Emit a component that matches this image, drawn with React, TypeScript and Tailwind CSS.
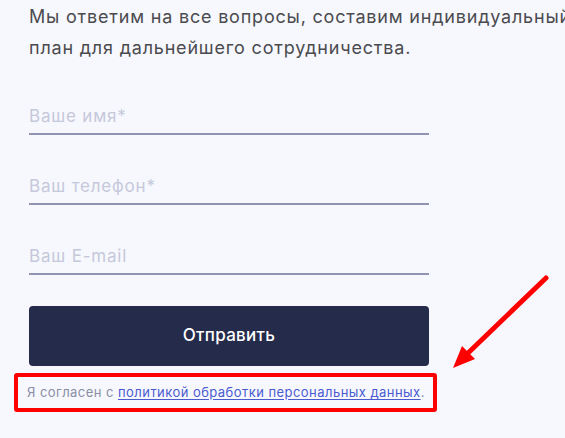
import React from 'react'

/**
 * Feedback form with consent note (annotated with a red frame and arrow)
 */

const fields = ['Ваше имя*', 'Ваш телефон*', 'Ваш E-mail']

function Field({ placeholder }: { placeholder: string }) {
  return (
    <div className="h-[44px] flex items-end pb-[7px] border-b-2 border-[#9094b0]">
      <input
        type="text"
        placeholder={placeholder}
        className="w-full bg-transparent outline-none text-[17px] leading-[20px] tracking-[0.8px] text-[#333] placeholder:text-[#c5c8db]"
      />
    </div>
  )
}

export default function App() {
  return (
    <div
      className="relative w-[565px] h-[438px] overflow-hidden bg-[#f7f8fd]"
      style={{ fontFamily: 'Inter, "Noto Sans", sans-serif' }}
    >
      <div className="flex flex-col pl-[29px]">
        <p className="whitespace-nowrap text-[18px] leading-[31px] tracking-[0.8px] text-[#4b4b4f] mt-[1px]">
          Мы ответим на все вопросы, составим индивидуальный
          <br />
          план для дальнейшего сотрудничества.
        </p>

        <form className="w-[400px] flex flex-col gap-[26px] mt-[28px]" onSubmit={(e) => e.preventDefault()}>
          {fields.map((f) => (
            <Field key={f} placeholder={f} />
          ))}
        </form>

        <button
          type="button"
          className="w-[400px] h-[60px] mt-[31px] rounded-[4px] bg-[#252b4a] text-white text-[17px] font-medium tracking-[0.3px]"
        >
          Отправить
        </button>

        {/* consent, framed in red */}
        <div className="ml-[-15px] mt-[7px] w-[423px] h-[39px] border-4 border-[#ff0000] rounded-[3px] flex items-center pl-[9px]">
          <span className="text-[13px] tracking-[0.45px] text-[#8a8ea6] whitespace-nowrap">
            Я согласен с{' '}
            <a href="#" className="text-[#4a5bd0] underline underline-offset-2">
              политикой обработки персональных данных
            </a>
            .
          </span>
        </div>
      </div>

      {/* red arrow pointing at the consent */}
      <svg className="absolute left-0 top-0 pointer-events-none" width="565" height="438">
        <line x1="546" y1="278" x2="466" y2="355" stroke="#ff0000" strokeWidth="5" strokeLinecap="round" />
        <polygon points="453,368 475,359 462,346" fill="#ff0000" />
      </svg>
    </div>
  )
}
